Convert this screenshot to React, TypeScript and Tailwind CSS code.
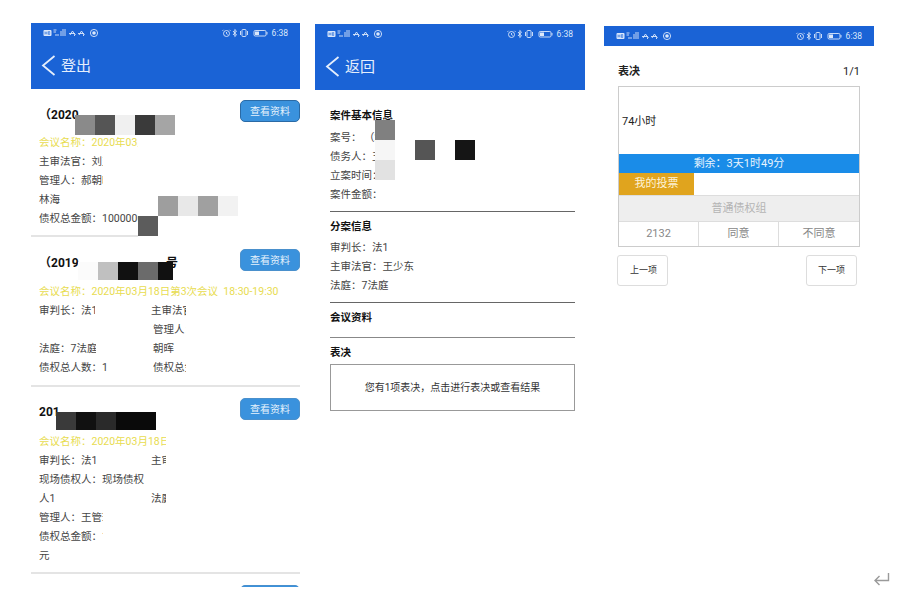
import React from 'react'

const StatusBar = ({ className = '' }: { className?: string }) => (
  <div className={`flex items-center justify-between h-[20px] px-3 text-[8.5px] text-[#dbe8fb] ${className}`}>
    <svg width="58" height="10" viewBox="0 0 58 10" fill="none" stroke="#dbe8fb" strokeWidth="0.9">
      <rect x="0.5" y="2" width="8" height="6" rx="1" fill="#dbe8fb" stroke="none" />
      <path d="M2 3.5v3M4 3.5v3M2 5h2M5.5 3.5v3h1.2V3.5z" stroke="#1a63d6" strokeWidth="0.6" />
      <path d="M10.5 2h3M10.5 4h2.5M13 6v2M15 8V6M18 8V3M20 8V1M22 8V1" />
      <path d="M27 7l2.5-4 2.5 4M26 5.5h6M31 8l1.5-1.5" />
      <path d="M36 7l2.5-4 2.5 4M35 5.5h6M40 8l1.5-1.5" />
      <circle cx="51" cy="5" r="3.6" />
      <circle cx="51" cy="5" r="1.8" fill="#dbe8fb" stroke="none" />
    </svg>
    <div className="flex items-center gap-[3px]">
      <svg width="47" height="10" viewBox="0 0 47 10" fill="none" stroke="#dbe8fb" strokeWidth="0.9">
        <circle cx="4.5" cy="5.5" r="3" />
        <path d="M4.5 4v1.7l1.2.7M1.5 1.8L0.5 2.8M7.5 1.8l1 1" />
        <path d="M11 3l3.5 4-1.7 1.5V1.5L14.5 3 11 7" />
        <rect x="20" y="1.5" width="4" height="7" rx="0.8" />
        <path d="M18.5 3v4M25.5 3v4" />
        <rect x="32" y="2.5" width="12" height="5.5" rx="1.2" />
        <rect x="33" y="3.5" width="4" height="3.5" fill="#dbe8fb" stroke="none" />
        <path d="M45 4v2.5" />
      </svg>
      <span>6:38</span>
    </div>
  </div>
)

const Header = ({ title }: { title: string }) => (
  <div className="bg-[#1a63d6] h-[66px]">
    <StatusBar />
    <div className="flex items-center h-[44px] pl-[10px] gap-[5px] text-[15px] text-[#e4eefc]">
      <svg width="15" height="21" viewBox="0 0 15 21" fill="none" stroke="#e4eefc" strokeWidth="1.8">
        <path d="M13.5 1L2 10.5 13.5 20" />
      </svg>
      <span className="pt-[2px]">{title}</span>
    </div>
  </div>
)

const ViewButton = ({ className = '' }: { className?: string }) => (
  <button className={`w-[60px] h-[22px] shrink-0 rounded-[5px] border bg-[#3a92dd] text-[#e6f2fc] text-[10px] ${className}`}>
    查看资料
  </button>
)

// text cut off by the white cover in the screenshot
const Clip = ({ className = '', children }: { className?: string; children: React.ReactNode }) => (
  <div className={`overflow-hidden whitespace-nowrap ${className}`}>{children}</div>
)

const Row = ({ children }: { children: React.ReactNode }) => (
  <div className="grid grid-cols-[112px_1fr] h-[19px] leading-[19px]">{children}</div>
)

const MeetingList = () => (
  <div className="w-[269px] h-[564px] mt-[23px] shrink-0 overflow-hidden">
    <Header title="登出" />

    <div className="pt-[11px] h-[148px] text-[10.5px] text-[#444]">
      <div className="flex justify-between h-[33px] pl-2">
        <div className="pt-[5px] text-[12px] leading-[20px] font-bold text-[#111]">（2020</div>
        <ViewButton className="border-[#2a6aa5]" />
      </div>
      <div className="pl-2">
        <Clip className="w-[99px] h-[19px] leading-[19px] text-[#e8dc50]">会议名称：2020年03月</Clip>
        <Clip className="w-[64px] h-[19px] leading-[19px]">主审法官：刘玉</Clip>
        <Clip className="w-[64px] h-[19px] leading-[19px]">管理人：郝朝晖</Clip>
        <div className="h-[19px] leading-[19px]">林海</div>
        <Clip className="w-[99px] h-[19px] leading-[19px]">债权总金额：10000000</Clip>
      </div>
      <div className="w-[107px] h-[2px] mt-[7px] bg-[#e4e4e4]" />
    </div>

    <div className="pt-[12px] h-[150px] border-b-2 border-[#e4e4e4] text-[10.5px] text-[#444]">
      <div className="flex justify-between h-[33px] pl-2">
        <div className="pt-[4px] text-[12px] leading-[20px] font-bold text-[#111]">（2019</div>
        <ViewButton className="border-[#4a90cc]" />
      </div>
      <div className="pl-2">
        <div className="h-[19px] leading-[19px] text-[#e8dc50]">会议名称：2020年03月18日第3次会议&nbsp;&nbsp;18:30-19:30</div>
        <Row>
          <Clip className="w-[56px]">审判长：法1</Clip>
          <Clip className="w-[35px]">主审法官</Clip>
        </Row>
        <Row>
          <div />
          <Clip className="w-[33px] ml-[2px]">管理人：</Clip>
        </Row>
        <Row>
          <Clip className="w-[57px]">法庭：7法庭</Clip>
          <div className="ml-[2px]">朝晖</div>
        </Row>
        <Row>
          <div>债权总人数：1</div>
          <Clip className="w-[33px] ml-[2px]">债权总金</Clip>
        </Row>
      </div>
    </div>

    <div className="pt-[11px] h-[187px] border-b-2 border-[#e4e4e4] text-[10.5px] text-[#444]">
      <div className="flex justify-between h-[34px] pl-2">
        <div className="pt-[4px] text-[12px] leading-[20px] font-bold text-[#111]">201</div>
        <ViewButton className="border-[#4a90cc]" />
      </div>
      <div className="pl-2">
        <Clip className="w-[127px] h-[19px] leading-[19px] text-[#e8dc50]">会议名称：2020年03月18日第</Clip>
        <Row>
          <div>审判长：法1</div>
          <Clip className="w-[15px]">主审法</Clip>
        </Row>
        <Row>
          <Clip className="w-[108px]">现场债权人：现场债权</Clip>
          <div />
        </Row>
        <Row>
          <div>人1</div>
          <Clip className="w-[15px]">法庭</Clip>
        </Row>
        <Clip className="w-[64px] h-[19px] leading-[19px]">管理人：王管理</Clip>
        <Clip className="w-[64px] h-[19px] leading-[19px]">债权总金额：1</Clip>
        <div className="h-[19px] leading-[19px]">元</div>
      </div>
    </div>

    <div className="pt-[11px] pl-2 flex justify-end">
      <ViewButton className="border-[#4a90cc]" />
    </div>
  </div>
)

const SectionTitle = ({ children }: { children: React.ReactNode }) => (
  <div className="text-[10.5px] leading-[19px] font-bold text-[#111]">{children}</div>
)

const Line = ({ children }: { children: React.ReactNode }) => (
  <div className="text-[10.5px] leading-[19px] h-[19px] text-[#444]">{children}</div>
)

const CaseDetail = () => (
  <div className="w-[270px] mt-[24px] ml-[15px] shrink-0">
    <Header title="返回" />
    <div className="pl-[15px] pr-[10px] pt-[16px]">
      <div className="border-b border-[#666] pb-[7px]">
        <div className="mb-[3px]">
          <SectionTitle>案件基本信息</SectionTitle>
        </div>
        <Line>案号： （2</Line>
        <Line>债务人：王</Line>
        <Line>立案时间：</Line>
        <Line>案件金额：</Line>
      </div>
      <div className="border-b border-[#666] pt-[5px] pb-[7px]">
        <div className="mb-[2px]">
          <SectionTitle>分案信息</SectionTitle>
        </div>
        <Line>审判长：法1</Line>
        <Line>主审法官：王少东</Line>
        <Line>法庭：7法庭</Line>
      </div>
      <div className="border-b border-[#888] h-[35px] pt-[5px]">
        <SectionTitle>会议资料</SectionTitle>
      </div>
      <div className="pt-[5px]">
        <SectionTitle>表决</SectionTitle>
        <div className="flex items-center justify-center h-[47px] mt-[2px] border border-[#999] text-[10px] text-[#333]">
          您有1项表决，点击进行表决或查看结果
        </div>
      </div>
    </div>
  </div>
)

const VoteDetail = () => (
  <div className="w-[270px] mt-[26px] ml-[19px] shrink-0">
    <div className="bg-[#1a63d6]">
      <StatusBar />
    </div>
    <div className="pl-[14px] pr-[14px] pt-[16px]">
      <div className="flex items-center justify-between h-[20px] text-[11px] text-[#222]">
        <span className="font-bold">表决</span>
        <span>1/1</span>
      </div>
      <div className="mt-[4px] border border-[#ccc] text-[11px]">
        <div className="flex items-center h-[67px] pl-[3px] pt-[3px] text-[#222]">74小时</div>
        <div className="flex items-center justify-center h-[19px] pt-[2px] bg-[#1a8ce8] text-[#e8f4fe]">剩余：3天1时49分</div>
        <div className="h-[23px] border-b border-[#ddd]">
          <div className="flex items-center justify-center w-[75px] h-full pt-[1px] bg-[#e0a41e] text-[#fdf3d8]">我的投票</div>
        </div>
        <div className="flex items-center justify-center h-[25px] pt-[2px] bg-[#eeeeee] text-[#b4b4b4]">普通债权组</div>
        <div className="grid grid-cols-3 h-[25px] border-t border-[#ddd] text-[#888]">
          <div className="flex items-center justify-center pt-[1px] border-r border-[#ddd]">2132</div>
          <div className="flex items-center justify-center pt-[1px] border-r border-[#ddd]">同意</div>
          <div className="flex items-center justify-center pt-[1px]">不同意</div>
        </div>
      </div>
      <div className="flex justify-between mt-[8px] mr-[3px] text-[9px] text-[#333]">
        <button className="w-[51px] h-[31px] -ml-px pl-[2px] rounded-[3px] border border-[#ddd]">上一项</button>
        <button className="w-[51px] h-[31px] rounded-[3px] border border-[#ddd]">下一项</button>
      </div>
    </div>
  </div>
)

export default function App() {
  return (
    <div
      className="relative flex items-start w-[900px] h-[599px] pl-[31px] overflow-hidden bg-white"
      style={{ fontFamily: 'Roboto, "Noto Sans CJK SC", sans-serif' }}
    >
      <MeetingList />
      <CaseDetail />
      <VoteDetail />

      {/* mosaic covers over the private text */}
      <div className="absolute left-[75px] top-[115px] flex h-5">
        <div className="w-5 bg-[#8a8a8a]" />
        <div className="w-5 bg-[#555555]" />
        <div className="w-5 bg-[#f0f0f0]" />
        <div className="w-5 bg-[#3a3a3a]" />
        <div className="w-5 bg-[#a5a5a5]" />
      </div>
      <div className="absolute left-[158px] top-[196px] flex h-5">
        <div className="w-5 bg-[#9e9e9e]" />
        <div className="w-5 bg-[#e8e8e8]" />
        <div className="w-5 bg-[#a0a0a0]" />
        <div className="w-5 bg-[#f2f2f2]" />
      </div>
      <div className="absolute left-[138px] top-[216px] w-5 h-5 bg-[#5c5c5c]" />
      <div className="absolute left-[166px] top-[253px] text-[12px] leading-[20px] font-bold text-[#111]">号</div>
      <div className="absolute left-[78px] top-[262px] flex h-[18px]">
        <div className="w-5 bg-[#fbfbfb]" />
        <div className="w-5 bg-[#c0c0c0]" />
        <div className="w-5 bg-[#111111]" />
        <div className="w-5 bg-[#6b6b6b]" />
        <div className="w-[15px] bg-[#111111]" />
      </div>
      <div className="absolute left-[56px] top-[412px] flex h-[18px]">
        <div className="w-5 bg-[#3a3a3a]" />
        <div className="w-5 bg-[#111111]" />
        <div className="w-5 bg-[#2a2a2a]" />
        <div className="w-10 bg-[#0a0a0a]" />
      </div>
      <div className="absolute left-[375px] top-[120px] w-5 h-5 bg-[#808080]" />
      <div className="absolute left-[375px] top-[140px] w-5 h-5 bg-[#f6f6f6]" />
      <div className="absolute left-[375px] top-[160px] w-5 h-5 bg-[#e2e2e2]" />
      <div className="absolute left-[415px] top-[140px] w-5 h-5 bg-[#555555]" />
      <div className="absolute left-[455px] top-[140px] w-5 h-5 bg-[#151515]" />

      <svg
        className="absolute left-[873px] top-[572px]"
        width="17"
        height="14"
        viewBox="0 0 17 14"
        fill="none"
        stroke="#9a9a9a"
        strokeWidth="1.4"
      >
        <path d="M15.5 1v7.5H2M6.5 4L2 8.5l4.5 4.5" />
      </svg>
    </div>
  )
}
